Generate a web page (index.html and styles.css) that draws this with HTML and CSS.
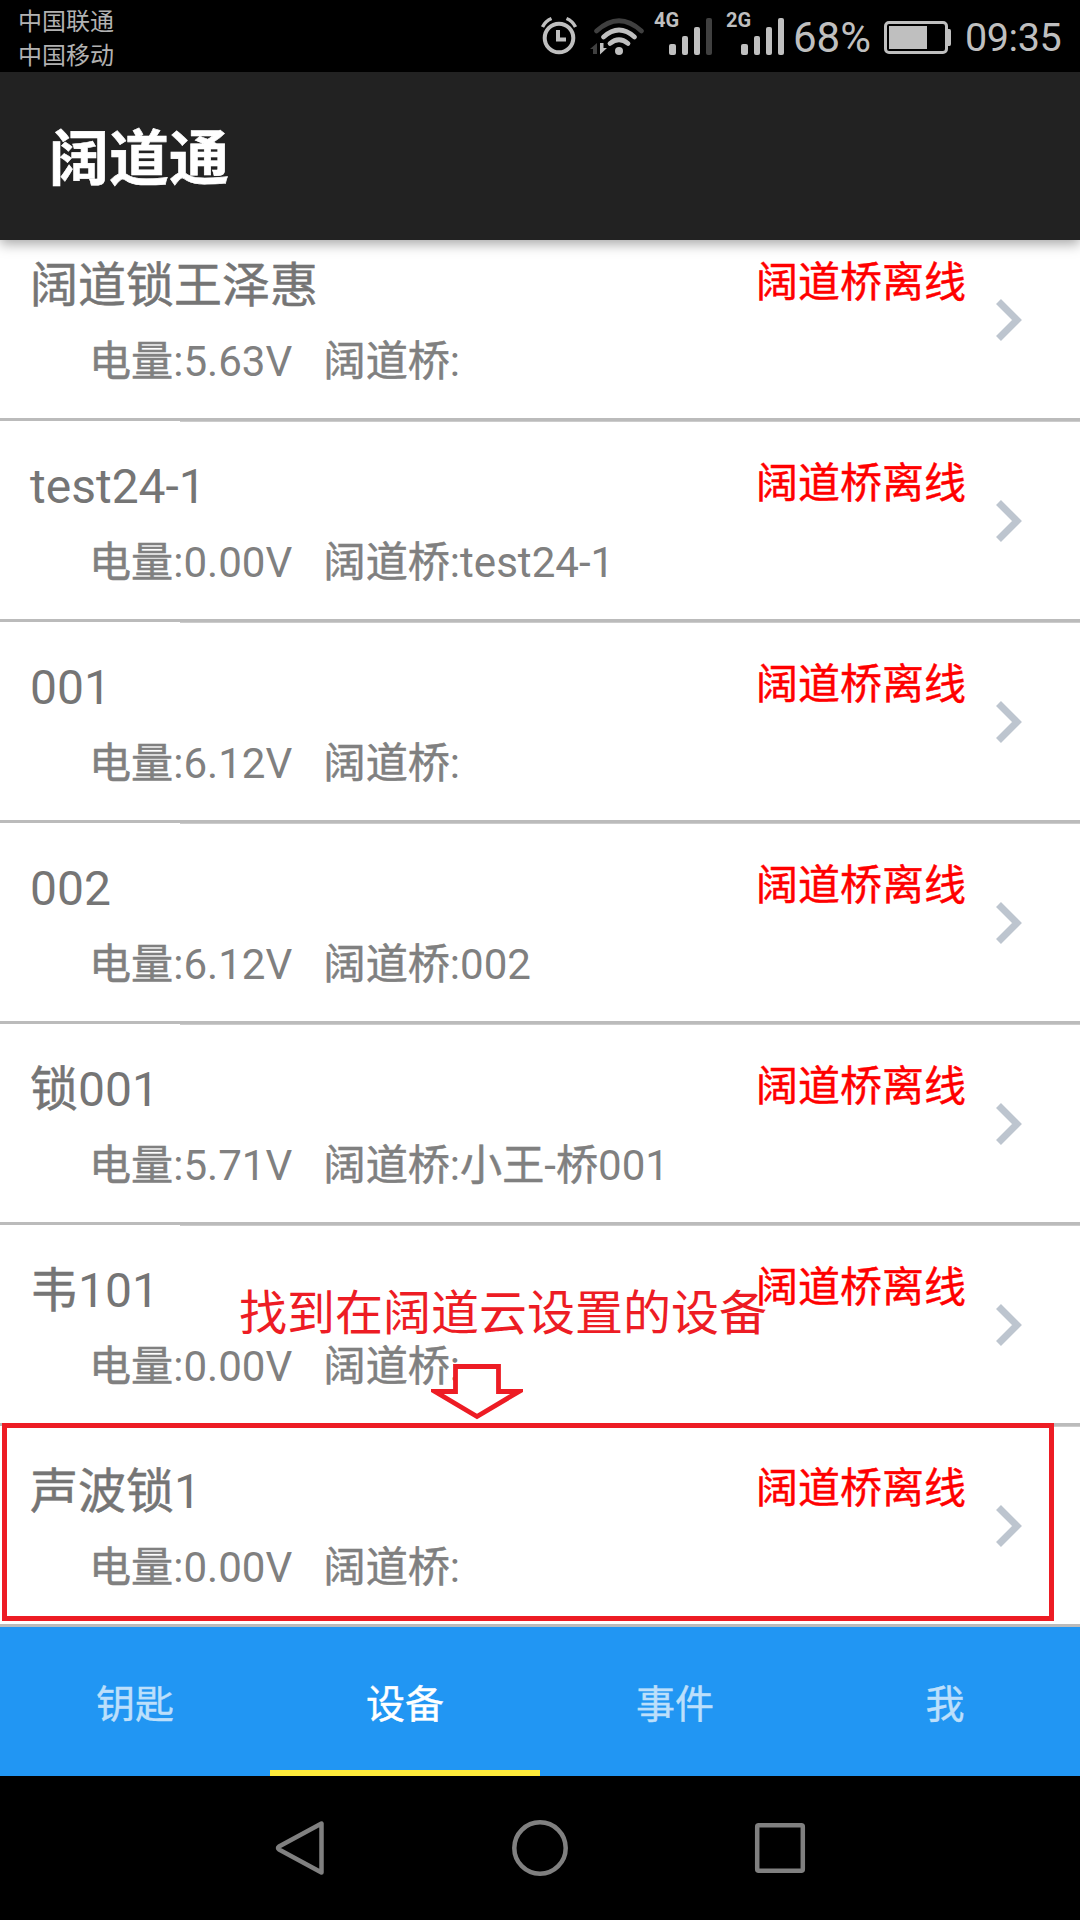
FILE: index.html
```html
<!DOCTYPE html>
<html lang="zh-CN">
<head>
<meta charset="utf-8">
<title>阔道通</title>
<link rel="stylesheet" href="styles.css">
</head>
<body>
<div class="screen">
  <div class="statusbar">
    <div class="carriers"><span>中国联通</span><span>中国移动</span></div>
    <svg class="status-icons" width="255" height="72" viewBox="535 0 255 72">
      <g fill="none" stroke="#bfbfbf" stroke-width="4">
        <circle cx="559" cy="38" r="14.3"/>
        <path d="M558 30v9.500h8" stroke-width="4"/>
        <path d="M542.500 27q3-6 9-8.500M575.500 27q-3-6-9-8.500" stroke-width="3.500"/>
      </g>
      <g fill="none" stroke="#bfbfbf" stroke-width="4.800" stroke-linecap="round">
        <path d="M596.500 31q22.500-20.500 45 0" stroke="#404040"/>
        <path d="M603.500 37q15.500-14 31 0"/>
        <path d="M610 43.500q9-7.500 18 0"/>
      </g>
      <circle cx="619" cy="51" r="4" fill="#bfbfbf"/>
      <path d="M590 49l7-6v11h-4v-5z" fill="#404040"/>
      <path d="M600 43h3.500v5h3.500l-7 6.500z" fill="#bfbfbf"/>
      <g fill="#bfbfbf">
        <rect x="669" y="44" width="7" height="11" rx="2"/>
        <rect x="682" y="36" width="6" height="19" rx="2"/>
        <rect x="694" y="27" width="6" height="28" rx="2"/>
        <rect x="706" y="18" width="6" height="37" rx="2" fill="#404040"/>
        <rect x="741" y="44" width="7" height="11" rx="2"/>
        <rect x="754" y="36" width="6" height="19" rx="2"/>
        <rect x="766" y="27" width="6" height="28" rx="2"/>
        <rect x="778" y="18" width="6" height="37" rx="2"/>
      </g>
      <g class="net">
        <text x="654" y="27">4G</text>
        <text x="726" y="27">2G</text>
      </g>
    </svg>
    <span class="percent">68%</span>
    <svg class="battery" width="68" height="34" viewBox="0 0 68 34">
      <rect x="1.500" y="1.500" width="61" height="30" rx="3.500" fill="none" stroke="#bfbfbf" stroke-width="3"/>
      <rect x="5" y="5" width="38" height="23" fill="#bfbfbf"/>
      <path d="M64 8h1.500q1.500 0 1.500 2v13q0 2-1.500 2h-1.500z" fill="#bfbfbf"/>
    </svg>
    <span class="clock">09:35</span>
  </div>

  <header class="appbar"><h1>阔道通</h1></header>

  <main class="list">
    <div class="row">
      <div class="info"><div class="name"><b>阔道锁王泽惠</b></div><div class="detail"><b>电量</b>:5.63V   <b>阔道桥</b>:</div></div>
      <div class="state">阔道桥离线</div>
      <svg class="chevron" viewBox="0 0 26 42"><path d="M2.500 2.500L21 21L2.500 39.500"/></svg>
    </div>
    <div class="row">
      <div class="info"><div class="name">test24-1</div><div class="detail"><b>电量</b>:0.00V   <b>阔道桥</b>:test24-1</div></div>
      <div class="state">阔道桥离线</div>
      <svg class="chevron" viewBox="0 0 26 42"><path d="M2.500 2.500L21 21L2.500 39.500"/></svg>
    </div>
    <div class="row">
      <div class="info"><div class="name">001</div><div class="detail"><b>电量</b>:6.12V   <b>阔道桥</b>:</div></div>
      <div class="state">阔道桥离线</div>
      <svg class="chevron" viewBox="0 0 26 42"><path d="M2.500 2.500L21 21L2.500 39.500"/></svg>
    </div>
    <div class="row">
      <div class="info"><div class="name">002</div><div class="detail"><b>电量</b>:6.12V   <b>阔道桥</b>:002</div></div>
      <div class="state">阔道桥离线</div>
      <svg class="chevron" viewBox="0 0 26 42"><path d="M2.500 2.500L21 21L2.500 39.500"/></svg>
    </div>
    <div class="row">
      <div class="info"><div class="name"><b>锁</b>001</div><div class="detail"><b>电量</b>:5.71V   <b>阔道桥</b>:<b>小王</b>-<b>桥</b>001</div></div>
      <div class="state">阔道桥离线</div>
      <svg class="chevron" viewBox="0 0 26 42"><path d="M2.500 2.500L21 21L2.500 39.500"/></svg>
    </div>
    <div class="row">
      <div class="info"><div class="name"><b>韦</b>101</div><div class="detail"><b>电量</b>:0.00V   <b>阔道桥</b>:</div></div>
      <div class="state">阔道桥离线</div>
      <svg class="chevron" viewBox="0 0 26 42"><path d="M2.500 2.500L21 21L2.500 39.500"/></svg>
    </div>
    <div class="row">
      <div class="info"><div class="name"><b>声波锁</b>1</div><div class="detail"><b>电量</b>:0.00V   <b>阔道桥</b>:</div></div>
      <div class="state">阔道桥离线</div>
      <svg class="chevron" viewBox="0 0 26 42"><path d="M2.500 2.500L21 21L2.500 39.500"/></svg>
    </div>
  </main>

  <nav class="tabs">
    <div class="tab">钥匙</div>
    <div class="tab active">设备</div>
    <div class="tab">事件</div>
    <div class="tab">我</div>
  </nav>

  <div class="navbar">
    <svg width="540" height="60" viewBox="270 0 540 60" fill="none" stroke="#808080" stroke-width="4.500" stroke-linejoin="round">
      <path d="M321.500 5.500v49L279 31.500q-2-1.500 0-3z"/>
      <circle cx="540" cy="30" r="25.700"/>
      <rect x="757.200" y="7.200" width="45.600" height="45.600" rx="1.500"/>
    </svg>
  </div>

  <div class="callout-text">找到在阔道云设置的设备</div>
  <svg class="callout-arrow" width="92" height="56" viewBox="0 0 92 56">
    <path d="M24.500 2.500h43v25H88L46 52.500L4 27.500h20.500z" fill="#fff" stroke="#ed1c24" stroke-width="4.800"/>
  </svg>
  <div class="callout-box"></div>
</div>
</body>
</html>
```
FILE: styles.css
```css
* { box-sizing: border-box; }
body {
  margin: 0;
  background: #fff;
  font-family: Roboto, "Noto Sans CJK SC", sans-serif;
}
.screen {
  position: relative;
  display: flex;
  flex-direction: column;
  width: 1080px;
  height: 1920px;
  overflow: hidden;
}
.statusbar {
  display: flex;
  flex: none;
  align-items: center;
  height: 72px;
  background: #000;
  color: #bfbfbf;
  white-space: nowrap;
}
.carriers {
  display: flex;
  flex-direction: column;
  width: 535px;
  padding: 5px 0 0 18px;
  color: #b2b2b2;
  font-size: 24px;
  line-height: 34px;
}
.status-icons { flex: none; }
.net { fill: #bfbfbf; font-weight: 700; font-size: 20px; }
.percent { width: 94px; padding: 3px 0 0 3px; font-size: 42px; }
.battery { flex: none; margin-top: 3px; }
.clock { margin-left: 13px; padding-top: 3px; font-size: 39.5px; letter-spacing: -.4px; }

.appbar {
  position: relative;
  z-index: 1;
  display: flex;
  flex: none;
  align-items: center;
  height: 168px;
  padding: 8px 0 0 49px;
  background: #222;
  box-shadow: 0 4px 12px rgba(0, 0, 0, .35);
}
.appbar h1 {
  margin: 0;
  color: #fff;
  font-size: 60px;
  line-height: 88px;
  -webkit-text-stroke: .6px;
}
.list {
  flex: none;
  height: 1387px;
  overflow: hidden;
}
.row {
  display: flex;
  height: 201px;
  padding: 32px 58px 0 30px;
  border-bottom: 3px solid #bbb;
  background: linear-gradient(#ccc, #ccc) 180px 0 / 900px 1px no-repeat #fff;
}
.row:first-child { margin-top: -20px; }
.info { flex: 1; margin-top: -1px; white-space: pre; }
.info b { font-weight: 400; -webkit-text-stroke: .5px; }
.name {
  height: 71px;
  color: #757575;
  font-size: 48px;
  line-height: 70px;
}
.detail {
  padding-left: 59px;
  color: #808080;
  font-size: 42.1px;
  line-height: 80px;
}
.state {
  color: #f00;
  font-size: 42px;
  line-height: 62px;
  -webkit-text-stroke: .4px;
}
.chevron {
  width: 26px;
  height: 42px;
  margin: 47px 0 0 30px;
  fill: none;
  stroke: #bdc5cf;
  stroke-width: 7;
}
.tabs {
  display: grid;
  flex: none;
  grid-template-columns: repeat(4, 1fr);
  height: 149px;
  background: #2196f3;
}
.tab {
  height: 149px;
  padding-top: 8px;
  border-bottom: 6px solid transparent;
  color: #bcdffb;
  font-size: 39px;
  line-height: 140px;
  text-align: center;
  -webkit-text-stroke: .4px;
}
.tab.active { border-color: #ffeb3b; color: #fff; }
.navbar {
  display: flex;
  flex: 1;
  align-items: center;
  justify-content: center;
  background: #000;
}
.callout-text {
  position: absolute;
  z-index: 2;
  top: 1274px;
  left: 239px;
  color: #ed1c24;
  font-family: "Noto Sans CJK SC", sans-serif;
  font-size: 48px;
  line-height: 70px;
  white-space: nowrap;
}
.callout-arrow { position: absolute; z-index: 2; top: 1364px; left: 431px; }
.callout-box {
  position: absolute;
  z-index: 2;
  top: 1423px;
  left: 2px;
  width: 1052px;
  height: 198px;
  border: 5px solid #ed1c24;
}
```
